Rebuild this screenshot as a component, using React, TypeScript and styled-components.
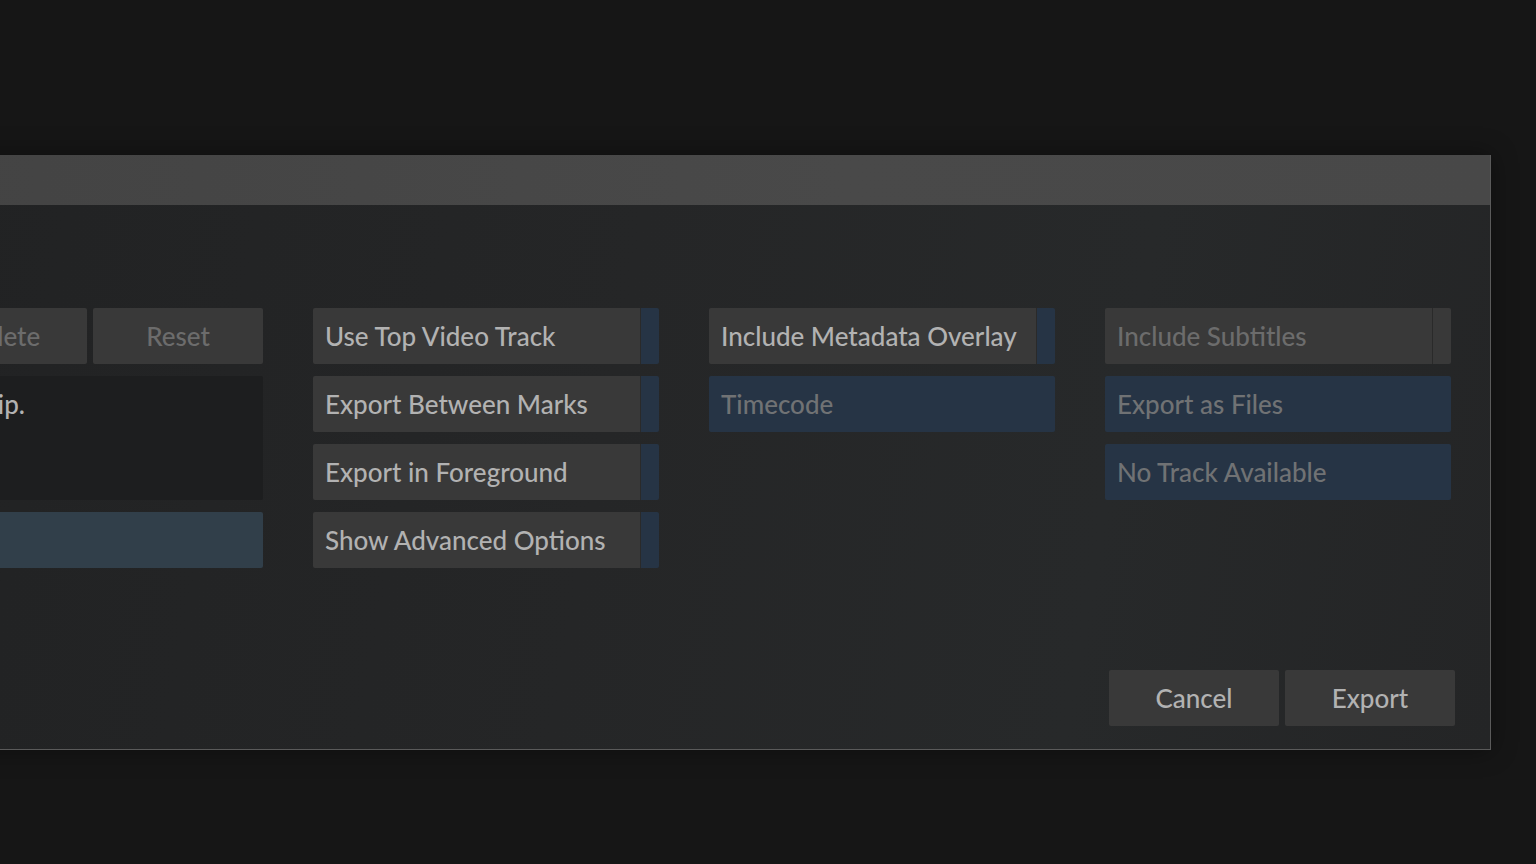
import React from "react";
import styled, { createGlobalStyle } from "styled-components";

const GlobalStyle = createGlobalStyle`
  html, body {
    margin: 0;
    padding: 0;
    background: #161616;
    overflow: hidden;
  }
  body {
    font-family: Lato, "Open Sans", sans-serif;
    font-weight: 500;
  }
`;

const SPage = styled.div`
  width: 1536px;
  height: 864px;
  padding-top: 155px;
  box-sizing: border-box;
  overflow: hidden;
`;

const SDialog = styled.div`
  display: flex;
  flex-direction: column;
  width: 1613px;
  margin-left: -123px;
  border-right: 1px solid #5a5a5a;
  border-bottom: 1px solid #5a5a5a;
  box-shadow: 0 0 24px rgba(0, 0, 0, 0.4);
`;

const STitleBar = styled.div`
  height: 50px;
  background: linear-gradient(90deg, #434343 0%, #494949 60%, #484848 100%);
`;

const SBody = styled.div`
  display: flex;
  flex-direction: column;
  height: 544px;
  box-sizing: border-box;
  padding: 103px 39px 23px 40px;
  background: linear-gradient(100deg, #212223 0%, #252627 45%, #27292a 75%, #242526 100%);
`;

const SColumns = styled.div`
  display: grid;
  grid-template-columns: repeat(4, 346px);
  column-gap: 50px;
  align-items: start;
`;

const SColumn = styled.div`
  display: flex;
  flex-direction: column;
  gap: 12px;
`;

const SRow = styled.div`
  display: flex;
  gap: 6px;
`;

const SButton = styled.div<{ $dim?: boolean }>`
  flex: 1;
  height: 56px;
  display: flex;
  align-items: center;
  justify-content: center;
  background: #393939;
  border-radius: 2px;
  color: ${({ $dim }) => ($dim ? "#6c6c6c" : "#b2b2b2")};
  font-size: 26px;
  user-select: none;
`;

const SNote = styled.div`
  height: 124px;
  box-sizing: border-box;
  padding: 0 12px;
  line-height: 56px;
  background: #1d1e1f;
  border-radius: 2px;
  color: #b2b2b2;
  font-size: 26px;
  white-space: nowrap;
  overflow: hidden;
`;

const SBar = styled.div`
  height: 56px;
  background: #313f4a;
  border-radius: 2px;
`;

const SToggle = styled.div<{ $disabled?: boolean }>`
  display: flex;
  height: 56px;
  border-radius: 2px;
  overflow: hidden;
  color: ${({ $disabled }) => ($disabled ? "#6c6c6c" : "#b2b2b2")};
  font-size: 26px;
`;

const SToggleLabel = styled.div`
  flex: 1;
  display: flex;
  align-items: center;
  padding-left: 12px;
  background: #393939;
  border-right: 1px solid #2a2a2a;
  white-space: nowrap;
`;

const SToggleKnob = styled.div<{ $disabled?: boolean }>`
  width: 18px;
  background: ${({ $disabled }) => ($disabled ? "#393939" : "#263445")};
`;

const SSelect = styled.div`
  height: 56px;
  display: flex;
  align-items: center;
  padding-left: 12px;
  background: #263445;
  border-radius: 2px;
  color: #707274;
  font-size: 26px;
  white-space: nowrap;
`;

const SFooter = styled.div`
  margin-top: auto;
  margin-right: -4px;
  display: flex;
  justify-content: flex-end;
  gap: 6px;
`;

const SFooterButton = styled(SButton)`
  flex: 0 0 170px;
`;

const Toggle: React.FC<{ label: string; disabled?: boolean }> = ({ label, disabled }) => (
  <SToggle $disabled={disabled}>
    <SToggleLabel>{label}</SToggleLabel>
    <SToggleKnob $disabled={disabled} />
  </SToggle>
);

const App: React.FC = () => {
  return (
    <SPage>
      <GlobalStyle />
      <SDialog>
        <STitleBar />
        <SBody>
          <SColumns>
            <SColumn>
              <SRow>
                <SButton $dim>Delete</SButton>
                <SButton $dim>Reset</SButton>
              </SRow>
              <SNote>Use clip.</SNote>
              <SBar />
            </SColumn>
            <SColumn>
              <Toggle label="Use Top Video Track" />
              <Toggle label="Export Between Marks" />
              <Toggle label="Export in Foreground" />
              <Toggle label="Show Advanced Options" />
            </SColumn>
            <SColumn>
              <Toggle label="Include Metadata Overlay" />
              <SSelect>Timecode</SSelect>
            </SColumn>
            <SColumn>
              <Toggle label="Include Subtitles" disabled />
              <SSelect>Export as Files</SSelect>
              <SSelect>No Track Available</SSelect>
            </SColumn>
          </SColumns>
          <SFooter>
            <SFooterButton>Cancel</SFooterButton>
            <SFooterButton>Export</SFooterButton>
          </SFooter>
        </SBody>
      </SDialog>
    </SPage>
  );
};

export default App;
